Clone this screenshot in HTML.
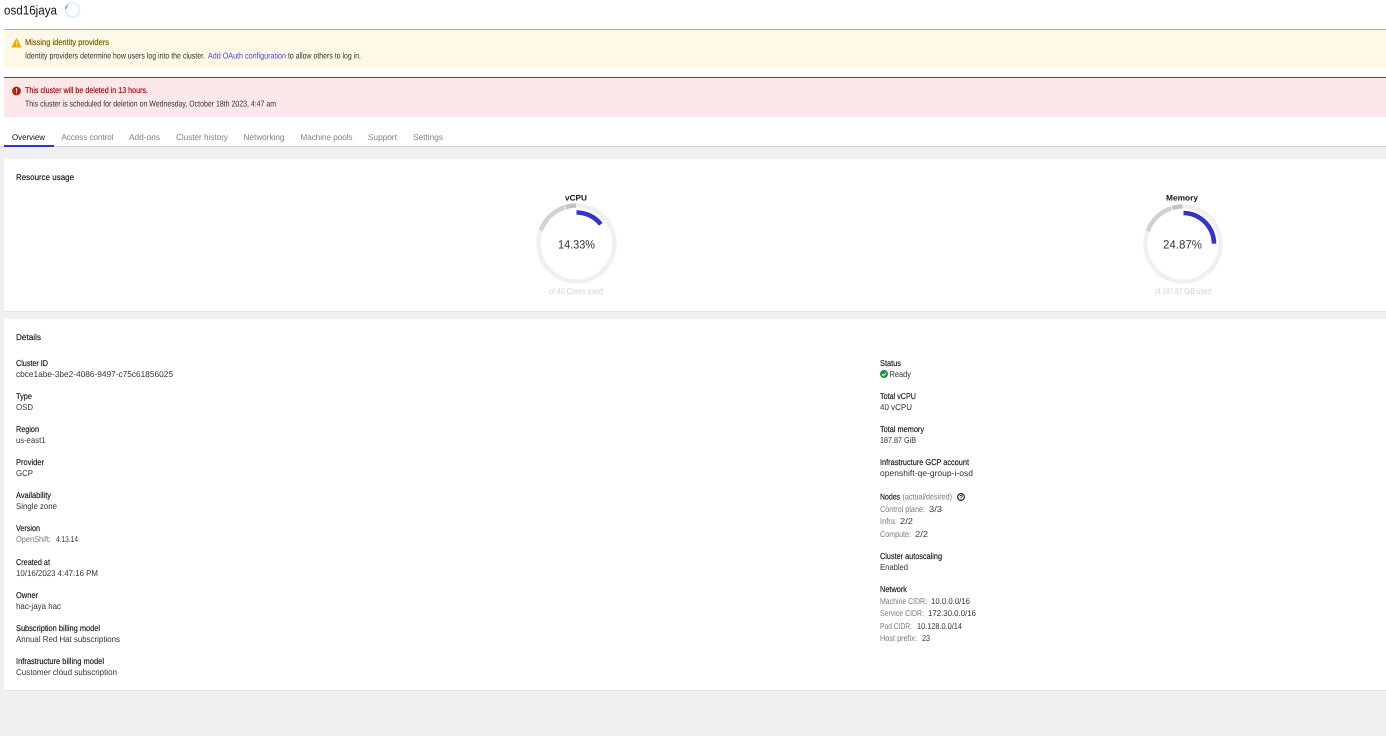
<!DOCTYPE html>
<html lang="en"><head><meta charset="utf-8"><title>osd16jaya</title>
<style>
html,body{margin:0;padding:0;width:1386px;height:736px;overflow:hidden;background:#f0f0f0}
svg{position:absolute;left:0;top:0;display:block}
text{font-family:"Liberation Sans",sans-serif;font-size:8.5px;fill:#333;white-space:pre;text-rendering:geometricPrecision}
.l{fill:#151515;font-weight:400;stroke:#151515;stroke-width:.15px}
.g{fill:#777b80}
.t{fill:#7d8185}
.h{fill:#151515;stroke:#151515;stroke-width:.15px}
</style></head><body>
<svg width="1386" height="736" viewBox="0 0 1386 736" xmlns="http://www.w3.org/2000/svg">
<rect width="1386" height="147" fill="#fff"/>
<rect x="0" y="146" width="1386" height="1" fill="#d2d2d2"/>
<rect x="4" y="145" width="50" height="2" fill="#3232cc"/>
<text x="4" y="14.5" textLength="53" lengthAdjust="spacingAndGlyphs" style="font-size:12.8px;fill:#151515">osd16jaya</text>
<circle cx="72.5" cy="10" r="7" fill="none" stroke="#d8ecfb" stroke-width="1.6"/>
<path d="M67.5 5.1A7 7 0 0 0 65.6 9" fill="none" stroke="#8f8fe0" stroke-width="1.6"/>

<rect x="4" y="29" width="1382" height="40" fill="#fdf9e6"/>
<rect x="4" y="29" width="1382" height="1" fill="#f0ab00"/>
<path d="M16.5 38.8L20.8 47H12.2Z" fill="#f0ab00" stroke="#f0ab00" stroke-linejoin="round"/>
<rect x="16.1" y="41" width=".9" height="3" fill="#fdf9e6"/><rect x="16.1" y="44.8" width=".9" height=".9" fill="#fdf9e6"/>
<text x="25" y="45.2" textLength="84" lengthAdjust="spacingAndGlyphs" style="fill:#795600;stroke:#795600;stroke-width:.15px">Missing identity providers</text>
<text x="25" y="58.5" textLength="180" lengthAdjust="spacingAndGlyphs">Identity providers determine how users log into the cluster.</text>
<text x="208" y="58.5" textLength="78" lengthAdjust="spacingAndGlyphs" style="fill:#4a4ad6">Add OAuth configuration</text>
<text x="288" y="58.5" textLength="73" lengthAdjust="spacingAndGlyphs">to allow others to log in.</text>

<rect x="4" y="77" width="1382" height="40" fill="#fce8e8"/>
<rect x="4" y="77" width="1382" height="1" fill="#c9190b"/>
<circle cx="16.5" cy="91" r="4.4" fill="#c9190b"/>
<rect x="16" y="88.2" width="1" height="3.4" fill="#fff"/><rect x="16" y="92.4" width="1" height="1" fill="#fff"/>
<text x="25" y="93.2" textLength="123" lengthAdjust="spacingAndGlyphs" style="fill:#a30000;stroke:#a30000;stroke-width:.15px">This cluster will be deleted in 13 hours.</text>
<text x="25" y="106.5" textLength="251" lengthAdjust="spacingAndGlyphs">This cluster is scheduled for deletion on Wednesday, October 18th 2023, 4:47 am</text>

<text x="12" y="140" textLength="33" lengthAdjust="spacingAndGlyphs" style="fill:#151515">Overview</text>
<text class="t" x="61.5" y="140" textLength="52" lengthAdjust="spacingAndGlyphs">Access control</text>
<text class="t" x="129" y="140" textLength="31" lengthAdjust="spacingAndGlyphs">Add-ons</text>
<text class="t" x="176" y="140" textLength="52" lengthAdjust="spacingAndGlyphs">Cluster history</text>
<text class="t" x="243.5" y="140" textLength="41" lengthAdjust="spacingAndGlyphs">Networking</text>
<text class="t" x="300.5" y="140" textLength="52" lengthAdjust="spacingAndGlyphs">Machine pools</text>
<text class="t" x="368" y="140" textLength="29" lengthAdjust="spacingAndGlyphs">Support</text>
<text class="t" x="413" y="140" textLength="30" lengthAdjust="spacingAndGlyphs">Settings</text>

<rect x="4" y="159" width="1382" height="152" fill="#fff"/>
<rect x="4" y="311" width="1382" height="1" fill="#e4e4e4"/>
<rect x="4" y="319" width="1382" height="371" fill="#fff"/>
<rect x="4" y="690" width="1382" height="1" fill="#e4e4e4"/>

<text class="h" x="16" y="180" textLength="58" lengthAdjust="spacingAndGlyphs">Resource usage</text>
<text class="h" x="16" y="340" textLength="25" lengthAdjust="spacingAndGlyphs">Details</text>

<g fill="none">
<circle cx="576.5" cy="243.5" r="38" stroke="#f0f0f0" stroke-width="4.6"/>
<path d="M540.8 230.5A38 38 0 0 1 564.8 207.3" stroke="#d2d2d2" stroke-width="4.6"/>
<path d="M565.9 207A38 38 0 0 1 575.9 205.5" stroke="#c0c4c8" stroke-width="4.6"/>
<path d="M576.5 212.5A31 31 0 0 1 600.8 224.3" stroke="#3232cc" stroke-width="4.6"/>
<circle cx="1183" cy="244" r="37.6" stroke="#f0f0f0" stroke-width="4.4"/>
<path d="M1147.7 231.1A37.6 37.6 0 0 1 1171.4 208.2" stroke="#d2d2d2" stroke-width="4.4"/>
<path d="M1172.5 207.9A37.6 37.6 0 0 1 1182.4 206.4" stroke="#c0c4c8" stroke-width="4.4"/>
<path d="M1183.5 213A31 31 0 0 1 1214 243.7" stroke="#3232cc" stroke-width="4.6"/>
</g>
<text x="565" y="200.3" textLength="22" lengthAdjust="spacingAndGlyphs" style="fill:#151515;font-weight:700;font-size:8px">vCPU</text>
<text x="558" y="248.3" textLength="37" lengthAdjust="spacingAndGlyphs" style="font-size:12px;fill:#333">14.33%</text>
<text x="549" y="294" textLength="54" lengthAdjust="spacingAndGlyphs" style="fill:#d2d2d2">of 40 Cores used</text>
<text x="1166" y="200.3" textLength="32" lengthAdjust="spacingAndGlyphs" style="fill:#151515;font-weight:700;font-size:8px">Memory</text>
<text x="1163" y="248.3" textLength="39" lengthAdjust="spacingAndGlyphs" style="font-size:12px;fill:#333">24.87%</text>
<text x="1155" y="294" textLength="56" lengthAdjust="spacingAndGlyphs" style="fill:#d2d2d2">of 187.87 GiB used</text>

<text class="l" x="16" y="366" textLength="32" lengthAdjust="spacingAndGlyphs">Cluster ID</text>
<text x="16" y="377" textLength="157" lengthAdjust="spacingAndGlyphs">cbce1abe-3be2-4086-9497-c75c61856025</text>
<text class="l" x="16" y="399" textLength="16" lengthAdjust="spacingAndGlyphs">Type</text>
<text x="16" y="410" textLength="17" lengthAdjust="spacingAndGlyphs">OSD</text>
<text class="l" x="16" y="432" textLength="23" lengthAdjust="spacingAndGlyphs">Region</text>
<text x="16" y="443" textLength="29.5" lengthAdjust="spacingAndGlyphs">us-east1</text>
<text class="l" x="16" y="465" textLength="28" lengthAdjust="spacingAndGlyphs">Provider</text>
<text x="16" y="476" textLength="17" lengthAdjust="spacingAndGlyphs">GCP</text>
<text class="l" x="16" y="498" textLength="35" lengthAdjust="spacingAndGlyphs">Availability</text>
<text x="16" y="509" textLength="41" lengthAdjust="spacingAndGlyphs">Single zone</text>
<text class="l" x="16" y="531" textLength="24" lengthAdjust="spacingAndGlyphs">Version</text>
<text class="g" x="16" y="542" textLength="35" lengthAdjust="spacingAndGlyphs">OpenShift:</text>
<text x="56" y="542" textLength="22" lengthAdjust="spacingAndGlyphs">4.13.14</text>
<text class="l" x="16" y="565" textLength="34" lengthAdjust="spacingAndGlyphs">Created at</text>
<text x="16" y="576" textLength="82" lengthAdjust="spacingAndGlyphs">10/16/2023 4:47:16 PM</text>
<text class="l" x="16" y="598" textLength="22" lengthAdjust="spacingAndGlyphs">Owner</text>
<text x="16" y="609" textLength="45" lengthAdjust="spacingAndGlyphs">hac-jaya hac</text>
<text class="l" x="16" y="631" textLength="84" lengthAdjust="spacingAndGlyphs">Subscription billing model</text>
<text x="16" y="642" textLength="104" lengthAdjust="spacingAndGlyphs">Annual Red Hat subscriptions</text>
<text class="l" x="16" y="664" textLength="88" lengthAdjust="spacingAndGlyphs">Infrastructure billing model</text>
<text x="16" y="675" textLength="101" lengthAdjust="spacingAndGlyphs">Customer cloud subscription</text>

<text class="l" x="880" y="366" textLength="21" lengthAdjust="spacingAndGlyphs">Status</text>
<circle cx="884" cy="374" r="4" fill="#1e8f3e"/>
<path d="M882 374.1L883.5 375.6L886.1 372.8" fill="none" stroke="#fff" stroke-width="1"/>
<text x="889.5" y="377" textLength="21.5" lengthAdjust="spacingAndGlyphs">Ready</text>
<text class="l" x="880" y="399" textLength="36" lengthAdjust="spacingAndGlyphs">Total vCPU</text>
<text x="880" y="410" textLength="32" lengthAdjust="spacingAndGlyphs">40 vCPU</text>
<text class="l" x="880" y="432" textLength="44" lengthAdjust="spacingAndGlyphs">Total memory</text>
<text x="880" y="443" textLength="36" lengthAdjust="spacingAndGlyphs">187.87 GiB</text>
<text class="l" x="880" y="465" textLength="89" lengthAdjust="spacingAndGlyphs">Infrastructure GCP account</text>
<text x="880" y="476" textLength="93" lengthAdjust="spacingAndGlyphs">openshift-qe-group-i-osd</text>
<text class="l" x="880" y="499.5" textLength="20" lengthAdjust="spacingAndGlyphs">Nodes</text>
<text class="g" x="902.5" y="499.5" textLength="49.5" lengthAdjust="spacingAndGlyphs">(actual/desired)</text>
<circle cx="961" cy="497" r="3.4" fill="none" stroke="#151515" stroke-width="1.1"/>
<path d="M959.8 496.2C960 494.9 962.2 495 962.2 496.2C962.2 497 961 497 961 498" fill="none" stroke="#151515" stroke-width=".8"/>
<rect x="960.6" y="498.5" width=".8" height=".8" fill="#151515"/>
<text class="g" x="880" y="512" textLength="45" lengthAdjust="spacingAndGlyphs">Control plane:</text>
<text x="929" y="512" textLength="13" lengthAdjust="spacingAndGlyphs">3/3</text>
<text class="g" x="880" y="524" textLength="17" lengthAdjust="spacingAndGlyphs">Infra:</text>
<text x="900" y="524" textLength="13" lengthAdjust="spacingAndGlyphs">2/2</text>
<text class="g" x="880" y="537" textLength="31" lengthAdjust="spacingAndGlyphs">Compute:</text>
<text x="915" y="537" textLength="13" lengthAdjust="spacingAndGlyphs">2/2</text>
<text class="l" x="880" y="559" textLength="62" lengthAdjust="spacingAndGlyphs">Cluster autoscaling</text>
<text x="880" y="570" textLength="28" lengthAdjust="spacingAndGlyphs">Enabled</text>
<text class="l" x="880" y="592" textLength="27" lengthAdjust="spacingAndGlyphs">Network</text>
<text class="g" x="880" y="604" textLength="47" lengthAdjust="spacingAndGlyphs">Machine CIDR:</text>
<text x="931" y="604" textLength="39" lengthAdjust="spacingAndGlyphs">10.0.0.0/16</text>
<text class="g" x="880" y="616" textLength="44" lengthAdjust="spacingAndGlyphs">Service CIDR:</text>
<text x="928" y="616" textLength="48" lengthAdjust="spacingAndGlyphs">172.30.0.0/16</text>
<text class="g" x="880" y="629" textLength="32" lengthAdjust="spacingAndGlyphs">Pod CIDR:</text>
<text x="917" y="629" textLength="45" lengthAdjust="spacingAndGlyphs">10.128.0.0/14</text>
<text class="g" x="880" y="641" textLength="37" lengthAdjust="spacingAndGlyphs">Host prefix:</text>
<text x="922" y="641" textLength="8" lengthAdjust="spacingAndGlyphs">23</text>
</svg>
</body></html>
